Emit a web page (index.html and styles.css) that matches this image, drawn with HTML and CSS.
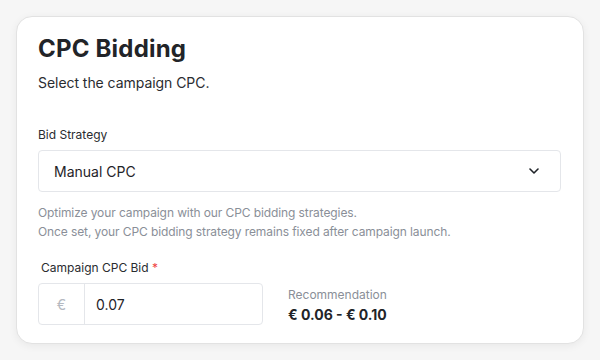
FILE: index.html
```html
<!DOCTYPE html>
<html lang="en">
<head>
<meta charset="utf-8">
<title>CPC Bidding</title>
<link rel="stylesheet" href="styles.css">
</head>
<body>
<div class="card">
  <h1 class="title">CPC Bidding</h1>
  <p class="subtitle">Select the campaign CPC.</p>

  <div class="field-label">Bid Strategy</div>
  <div class="select">
    <span class="select-value">Manual CPC</span>
    <svg class="chevron" width="10" height="6" viewBox="0 0 10 6" fill="none">
      <path d="M1 1l4 4 4-4" stroke="#1f2328" stroke-width="1.6" stroke-linecap="round" stroke-linejoin="round"/>
    </svg>
  </div>
  <p class="help">Optimize your campaign with our CPC bidding strategies.<br>Once set, your CPC bidding strategy remains fixed after campaign launch.</p>

  <div class="field-label bid-label">Campaign CPC Bid <span class="req">*</span></div>
  <div class="bid-row">
    <div class="input-group">
      <span class="prefix">€</span>
      <span class="input-value">0.07</span>
    </div>
    <div class="rec">
      <div class="rec-label">Recommendation</div>
      <div class="rec-value">€ 0.06 - € 0.10</div>
    </div>
  </div>
</div>
</body>
</html>
```
FILE: styles.css
```css
* { box-sizing: border-box; }
html, body { margin: 0; padding: 0; }
body {
  background: #f6f6f6;
  font-family: Inter, "Noto Sans", sans-serif;
  color: #1f2328;
  padding: 16px;
  width: 600px;
  height: 360px;
}
.card {
  width: 568px;
  height: 328px;
  background: #fff;
  border: 1px solid #e2e2e2;
  border-radius: 16px;
  box-shadow: 0 2px 8px rgba(0,0,0,0.06);
  padding: 16px 22px 18px 21px;
}
.title {
  margin: 0;
  font-size: 24px;
  line-height: 32px;
  font-weight: 700;
  letter-spacing: 0.2px;
  color: #222428;
}
.subtitle {
  margin: 7px 0 0;
  font-size: 14px;
  line-height: 22px;
  letter-spacing: -0.05px;
  color: #2a2c30;
}
.field-label {
  margin-top: 32px;
  font-size: 12px;
  line-height: 18px;
  color: #2a2c30;
}
.select {
  margin-top: 6px;
  height: 42px;
  border: 1px solid #e4e6ea;
  border-radius: 4px;
  display: flex;
  align-items: center;
  justify-content: space-between;
  padding: 0 21px 0 15px;
}
.select-value {
  font-size: 14px;
  color: #1f2328;
}
.help {
  margin: 11px 0 0;
  font-size: 12px;
  line-height: 19px;
  letter-spacing: -0.1px;
  color: #8a8f98;
}
.bid-label {
  margin-top: 18px;
  padding-left: 3px;
}
.req { color: #ef4444; }
.bid-row {
  margin-top: 6px;
  display: flex;
  align-items: flex-start;
  gap: 25px;
}
.input-group {
  width: 225px;
  height: 42px;
  border: 1px solid #e4e6ea;
  border-radius: 4px;
  display: flex;
  align-items: stretch;
}
.prefix {
  width: 46px;
  border-right: 1px solid #e4e6ea;
  display: flex;
  align-items: center;
  justify-content: center;
  font-size: 14px;
  color: #b4b9c1;
}
.input-value {
  display: flex;
  align-items: center;
  padding-left: 11px;
  font-size: 14px;
  color: #1f2328;
}
.rec {
  margin-top: 3px;
}
.rec-label {
  font-size: 12px;
  line-height: 18px;
  color: #8a8f98;
}
.rec-value {
  margin-top: 1px;
  font-size: 14px;
  line-height: 20px;
  font-weight: 700;
  color: #222428;
}
```
